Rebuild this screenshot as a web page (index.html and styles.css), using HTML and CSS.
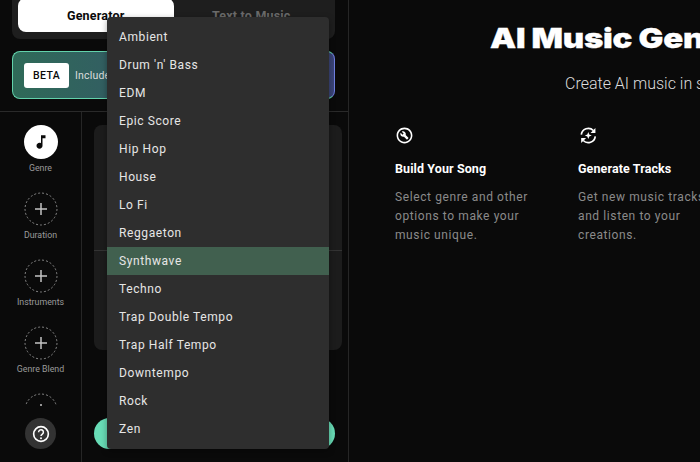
FILE: index.html
```html
<!DOCTYPE html>
<html lang="en">
<head>
<meta charset="utf-8">
<title>AI Music Generator</title>
<link rel="stylesheet" href="styles.css">
</head>
<body>
<div class="app">
  <section class="panel">
    <div class="top">
      <div class="tabs">
        <div class="tab tab-active">Generator</div>
        <div class="tab">Text to Music</div>
      </div>
      <div class="beta">
        <span class="beta-tag">BETA</span>
        <span class="beta-text">Includes new features</span>
      </div>
    </div>
    <div class="body">
      <nav class="side">
        <div class="steps">
          <div class="step">
            <span class="disc disc-on">
              <svg width="18" height="18" viewBox="0 0 24 24"><path fill="#0a0a0a" d="M12 3v10.55c-.59-.34-1.27-.55-2-.55-2.21 0-4 1.79-4 4s1.79 4 4 4 4-1.79 4-4V7h4V3h-6z"/></svg>
            </span>
            <span class="step-label">Genre</span>
          </div>
          <div class="step">
            <svg class="disc" viewBox="0 0 34 34" fill="none"><circle cx="17" cy="17" r="16" stroke="#8a8a8a" stroke-dasharray="2 2"/><path stroke="#c4c4c4" stroke-width="1.5" d="M17 11v12M11 17h12"/></svg>
            <span class="step-label">Duration</span>
          </div>
          <div class="step">
            <svg class="disc" viewBox="0 0 34 34" fill="none"><circle cx="17" cy="17" r="16" stroke="#8a8a8a" stroke-dasharray="2 2"/><path stroke="#c4c4c4" stroke-width="1.5" d="M17 11v12M11 17h12"/></svg>
            <span class="step-label">Instruments</span>
          </div>
          <div class="step">
            <svg class="disc" viewBox="0 0 34 34" fill="none"><circle cx="17" cy="17" r="16" stroke="#8a8a8a" stroke-dasharray="2 2"/><path stroke="#c4c4c4" stroke-width="1.5" d="M17 11v12M11 17h12"/></svg>
            <span class="step-label">Genre Blend</span>
          </div>
          <div class="step">
            <svg class="disc" viewBox="0 0 34 34" fill="none"><circle cx="17" cy="17" r="16" stroke="#8a8a8a" stroke-dasharray="2 2"/><path stroke="#c4c4c4" stroke-width="1.5" d="M17 11v12M11 17h12"/></svg>
          </div>
        </div>
        <div class="help">
          <svg width="18" height="18" viewBox="0 0 24 24" fill="none"><circle cx="12" cy="12" r="9.8" stroke="#fff" stroke-width="2.2"/><path d="M8.8 9.6a3.2 3.2 0 1 1 5 2.6c-1.1.8-1.8 1.3-1.8 2.6" stroke="#fff" stroke-width="2"/><circle cx="12" cy="17.6" r="1.3" fill="#fff"/></svg>
        </div>
      </nav>
      <div class="form">
        <div class="card"><div class="card-row"></div><div class="card-row"></div></div>
        <div class="go"></div>
      </div>
    </div>
  </section>
  <main class="main">
    <h1 class="title">AI Music Generator</h1>
    <p class="sub">Create AI music in seconds</p>
    <div class="features">
      <article class="feature">
        <svg class="ficon" width="19" height="19" viewBox="0 0 24 24"><path fill="#fff" fill-rule="evenodd" d="M12 2C6.48 2 2 6.48 2 12c0 5.52 4.48 10 10 10s10-4.48 10-10C22 6.48 17.52 2 12 2zM12 20c-4.41 0-8-3.59-8-8 0-4.41 3.59-8 8-8s8 3.59 8 8c0 4.41-3.59 8-8 8z"/><path fill="#fff" d="M13.49 11.38c.43-1.22.17-2.64-.81-3.62-1.11-1.11-2.79-1.3-4.1-.59l2.35 2.35-1.41 1.41-2.35-2.35c-.71 1.32-.52 2.99.59 4.1.98.98 2.4 1.24 3.62.81l3.41 3.41c.2.2.51.2.71 0l1.4-1.4c.2-.2.2-.51 0-.71l-3.41-3.41z"/></svg>
        <h2 class="ftitle">Build Your Song</h2>
        <p class="ftext">Select genre and other options to make your music unique.</p>
      </article>
      <article class="feature">
        <svg class="ficon" width="19" height="19" viewBox="-1 0 24 24" fill="none"><path d="M3.2 11a8.9 8.9 0 0 1 15.2-5.3M20.8 13a8.9 8.9 0 0 1-15.2 5.3" stroke="#fff" stroke-width="2.1"/><path d="M21 2.6v6.2h-6.2zM3 21.4v-6.2h6.2z" fill="#fff"/><path d="M12 7.6l1.2 3.2 3.2 1.2-3.2 1.2-1.2 3.2-1.2-3.2L7.6 12l3.2-1.2z" fill="#fff"/></svg>
        <h2 class="ftitle">Generate Tracks</h2>
        <p class="ftext">Get new music tracks and listen to your creations.</p>
      </article>
    </div>
  </main>
</div>
<ul class="menu">
  <li class="item">Ambient</li>
  <li class="item">Drum 'n' Bass</li>
  <li class="item">EDM</li>
  <li class="item">Epic Score</li>
  <li class="item">Hip Hop</li>
  <li class="item">House</li>
  <li class="item">Lo Fi</li>
  <li class="item">Reggaeton</li>
  <li class="item item-on">Synthwave</li>
  <li class="item">Techno</li>
  <li class="item">Trap Double Tempo</li>
  <li class="item">Trap Half Tempo</li>
  <li class="item">Downtempo</li>
  <li class="item">Rock</li>
  <li class="item">Zen</li>
</ul>
</body>
</html>
```
FILE: styles.css
```css
* { box-sizing: border-box; }
html, body { margin: 0; height: 100%; overflow: hidden; }
body { background: #0a0a0a; font-family: Roboto, sans-serif; color: #fff; }
.app { display: flex; width: 700px; height: 462px; overflow: hidden; }
.panel { flex: 0 0 349px; display: flex; flex-direction: column; border-right: 1px solid #262626; }
.top { flex: none; height: 122px; margin-top: -10px; padding: 0 13px 0 12px; border-bottom: 1px solid #2a2a2a; }
.tabs { display: flex; height: 49px; padding: 8px 6px 7px; background: #1e1e1e; border-radius: 0 0 8px 8px; }
.tab { flex: 1; display: flex; align-items: center; justify-content: center; font-size: 12.5px; font-weight: 700; color: #6a6a6a; border-radius: 8px; letter-spacing: .2px; }
.tab-active { background: #fff; color: #0a0a0a; }
.beta { display: flex; align-items: center; gap: 6px; height: 48px; margin-top: 12px; padding: 0 11px; border: 1px solid #62d2ab; border-right-color: #6f7fe0; border-radius: 8px; background: linear-gradient(90deg, #2f6a58, #3a4478); }
.beta-tag { flex: none; width: 45px; height: 25px; display: flex; align-items: center; justify-content: center; background: #fff; color: #0a0a0a; border-radius: 3px; font-size: 10.5px; font-weight: 500; letter-spacing: .4px; }
.beta-text { font-size: 10.5px; color: #ddd; letter-spacing: .2px; white-space: nowrap; }
.body { flex: 1; display: flex; min-height: 0; }
.side { flex: 0 0 82px; position: relative; border-right: 1px solid #262626; }
.steps { height: 294px; overflow: hidden; padding-top: 13px; display: flex; flex-direction: column; align-items: center; gap: 10px; }
.step { flex: none; display: flex; flex-direction: column; align-items: center; gap: 4px; height: 57px; }
.disc { width: 34px; height: 34px; border-radius: 50%; display: flex; align-items: center; justify-content: center; flex: none; }
.disc-on { background: #fff; }
.step-label { font-size: 8.8px; color: #9a9a9a; white-space: nowrap; }
.help { position: absolute; left: 25px; bottom: 13px; width: 31px; height: 31px; border-radius: 50%; background: #333; display: flex; align-items: center; justify-content: center; }
.form { flex: 1; display: flex; flex-direction: column; padding: 13px 6px 13px 12px; }
.card { width: 248px; height: 225px; background: #1c1c1c; border-radius: 8px; display: flex; flex-direction: column; }
.card-row { flex: none; height: 125px; }
.card-row + .card-row { height: 100px; border-top: 1px solid #333; }
.go { width: 241px; height: 31px; margin-top: auto; background: #68dcb6; border-radius: 16px; }
.main { flex: 1; min-width: 0; padding: 0 0 0 46px; }
.title { margin: 25px 0 0 95px; font: 900 27px/28px Inter, sans-serif; white-space: nowrap; transform: scaleX(1.22); transform-origin: 0 50%; letter-spacing: -.2px; -webkit-text-stroke: .3px #fff; }
.sub { margin: 19px 0 0 170px; font-size: 16px; line-height: 24px; font-weight: 300; color: #ddd; white-space: nowrap; }
.features { display: flex; gap: 33px; margin-top: 30px; width: 400px; }
.feature { flex: 0 0 150px; }
.ficon { display: block; }
.ftitle { margin: 15px 0 0; font-size: 12.5px; line-height: 18px; font-weight: 700; letter-spacing: .1px; white-space: nowrap; }
.ftext { margin: 10px 0 0; font-size: 12px; line-height: 19px; color: #8a8a8a; letter-spacing: .6px; }
.menu { position: absolute; left: 107px; top: 17px; width: 222px; margin: 0; padding: 6px 0; list-style: none; background: #2e2e2e; border-radius: 4px; box-shadow: 0 2px 6px rgba(0,0,0,.35); }
.item { height: 28px; padding: 0 12px; display: flex; align-items: center; font-size: 12px; color: #e6e6e6; letter-spacing: .6px; }
.item-on { background: #41604f; }
```
